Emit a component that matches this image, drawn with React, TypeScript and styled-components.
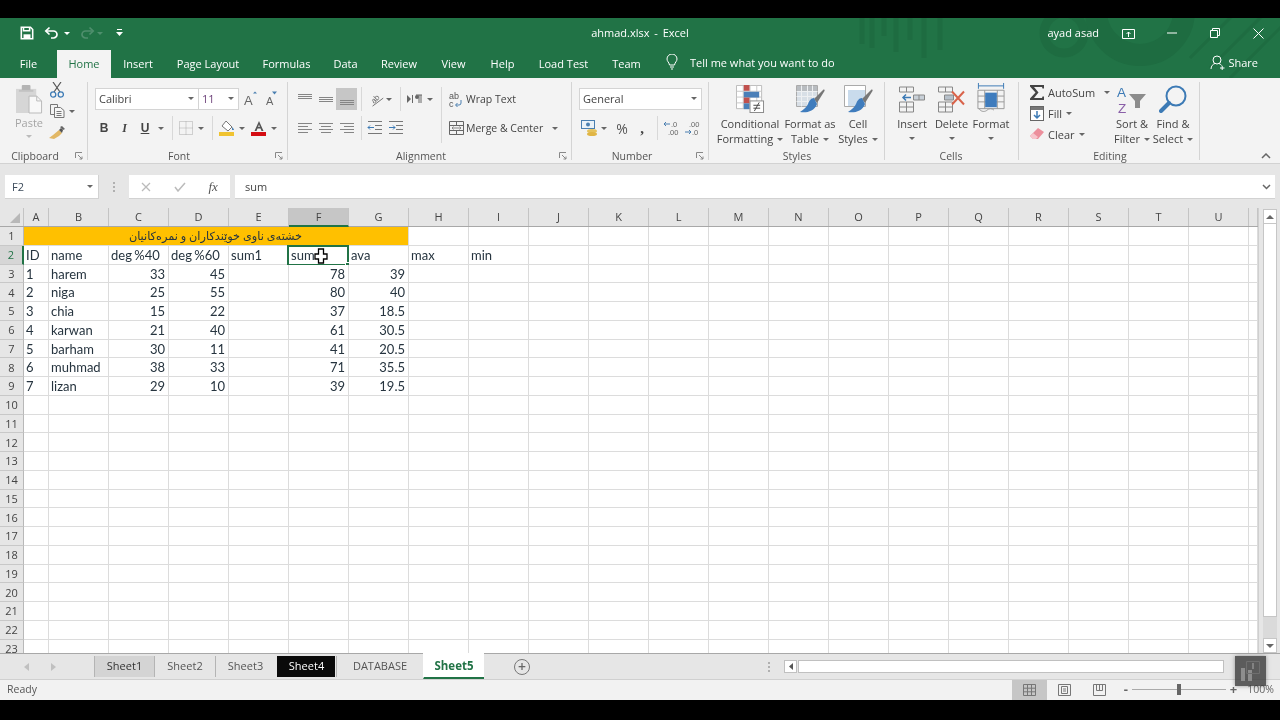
import * as React from 'react';
import styled, { createGlobalStyle } from 'styled-components';

const GlobalStyle = createGlobalStyle`
  html, body {
    margin: 0;
    background: #000;
  }
`;

const uiFont = `"Open Sans", "Noto Sans", "Liberation Sans", sans-serif`;
const cellFont = `Lato, "DejaVu Sans", "Liberation Sans", sans-serif`;

const Window = styled.div`
  width: 1280px;
  height: 720px;
  padding: 18px 0 20px;
  box-sizing: border-box;
  display: flex;
  flex-direction: column;
  background: #000;
  overflow: hidden;
  font-family: ${uiFont};
  font-size: 11px;
  color: #444;
  filter: blur(0.3px);
`;

/* green title + tabs */
const Head = styled.header`
  position: relative;
  height: 60px;
  flex: none;
  background: #217346;
  color: #fff;
  overflow: hidden;
`;

const Pattern = styled.svg`
  position: absolute;
  left: 840px;
  top: 0;
`;

const TitleBar = styled.div`
  position: relative;
  height: 30px;
  display: grid;
  grid-template-columns: 1fr auto 1fr;
  align-items: center;
`;

const Quick = styled.div`
  display: flex;
  align-items: center;
  padding-left: 20px;
`;

const TitleText = styled.div`
  font-size: 11px;
  word-spacing: 2px;
  padding-bottom: 2px;
`;

const WinControls = styled.div`
  display: flex;
  align-items: center;
  justify-content: flex-end;
`;

const UserName = styled.span`
  font-size: 11px;
  margin-right: 8px;
  padding-bottom: 2px;
`;

const WinBtn = styled.div<{ $w: number }>`
  width: ${(p) => p.$w}px;
  display: flex;
  justify-content: center;
  align-items: center;
`;

const TabBar = styled.nav`
  position: relative;
  height: 30px;
  display: flex;
`;

const Tab = styled.div<{ $w: number; $active?: boolean }>`
  width: ${(p) => p.$w}px;
  margin-top: 2px;
  padding-bottom: 2px;
  box-sizing: border-box;
  display: flex;
  align-items: center;
  justify-content: center;
  font-size: 11px;
  color: ${(p) => (p.$active ? '#217346' : '#fff')};
  background: ${(p) => (p.$active ? '#f3f3f3' : 'transparent')};
`;

const TellMe = styled.div`
  display: flex;
  align-items: center;
  gap: 12px;
  margin-left: 13px;
  padding-bottom: 2px;
  font-size: 11px;
`;

const Share = styled.div`
  margin-left: auto;
  margin-right: 22px;
  padding-bottom: 2px;
  display: flex;
  align-items: center;
  gap: 3px;
  font-size: 11px;
`;

/* ribbon */
const Ribbon = styled.section`
  position: relative;
  height: 86px;
  flex: none;
  display: flex;
  background: #f3f3f3;
  border-bottom: 1px solid #d2d2d2;
  box-sizing: border-box;
`;

const Group = styled.div<{ $w: number }>`
  position: relative;
  width: ${(p) => p.$w}px;
  height: 78px;
  margin-top: 4px;
  box-sizing: border-box;
  border-right: 1px solid #d4d4d4;
  flex: none;
`;

const GroupBody = styled.div<{ $pad?: number }>`
  height: 66px;
  display: flex;
  padding-left: ${(p) => p.$pad ?? 0}px;
`;

const GroupLabel = styled.div<{ $c: number }>`
  width: ${(p) => p.$c * 2}px;
  text-align: center;
  line-height: 16px;
  font-size: 10.5px;
  color: #555;
`;

const Launcher = styled.svg`
  position: absolute;
  right: 4px;
  bottom: 0;
`;

const Column = styled.div<{ $w?: number }>`
  display: flex;
  flex-direction: column;
  ${(p) => (p.$w ? `width: ${p.$w}px;` : '')}
`;

const ToolRow = styled.div<{ $pad?: number }>`
  display: flex;
  align-items: center;
  height: 22px;
  margin-top: 6px;
  padding-left: ${(p) => p.$pad ?? 0}px;
  & + & {
    margin-top: 7px;
  }
`;

const Slot = styled.div<{ $w: number; $on?: boolean }>`
  width: ${(p) => p.$w}px;
  height: 22px;
  flex: none;
  display: flex;
  align-items: center;
  justify-content: center;
  background: ${(p) => (p.$on ? '#c6c6c6' : 'transparent')};
`;

const Caret = styled.span<{ $inline?: boolean; $color?: string; $gap?: number; $top?: number }>`
  display: inline-block;
  width: 0;
  height: 0;
  border-left: 3px solid transparent;
  border-right: 3px solid transparent;
  border-top: 3px solid ${(p) => p.$color ?? '#666'};
  margin-left: ${(p) => p.$gap ?? (p.$inline ? 4 : 0)}px;
  margin-top: ${(p) => p.$top ?? 0}px;
  ${(p) => (p.$inline ? 'vertical-align: 2px;' : '')}
`;

const Divider = styled.div<{ $l: number; $r: number }>`
  width: 1px;
  height: 24px;
  flex: none;
  background: #d8d8d8;
  margin: 0 ${(p) => p.$r}px 0 ${(p) => p.$l}px;
`;

const TallDivider = styled.div`
  width: 1px;
  height: 56px;
  margin-top: 5px;
  background: #d8d8d8;
  flex: none;
`;

const SelectBox = styled.div<{ $w: number; $color?: string; $join?: boolean }>`
  width: ${(p) => p.$w}px;
  height: 22px;
  margin-left: ${(p) => (p.$join ? -1 : 0)}px;
  box-sizing: border-box;
  display: flex;
  align-items: center;
  justify-content: space-between;
  padding: 0 4px 1px 3px;
  background: #fff;
  border: 1px solid #d4d4d4;
  font-size: 11px;
  color: ${(p) => p.$color ?? '#444'};
`;

const StyleLetter = styled.span<{ $i?: boolean; $u?: boolean }>`
  font-family: ${(p) => (p.$i ? `"Liberation Serif", serif` : `"Liberation Sans", sans-serif`)};
  font-size: 12px;
  font-weight: bold;
  font-style: ${(p) => (p.$i ? 'italic' : 'normal')};
  text-decoration: ${(p) => (p.$u ? 'underline' : 'none')};
  color: #444;
`;

const Percent = styled.span`
  font-size: 14px;
  color: #555;
`;

const Comma = styled.span`
  font-family: "Liberation Serif", serif;
  font-size: 15px;
  font-weight: bold;
  color: #444;
  line-height: 12px;
`;

const RowText = styled.span`
  font-size: 10.5px;
  margin-left: 2px;
  padding-bottom: 1px;
  color: #444;
  white-space: nowrap;
`;

const PasteBtn = styled.div`
  width: 32px;
  margin-left: 13px;
  margin-top: 3px;
  display: flex;
  flex-direction: column;
  align-items: center;
  color: #a5a5a5;
  font-size: 11px;
  line-height: 15px;
`;

const PasteText = styled.span`
  margin-top: 1px;
`;

const MiniColumn = styled.div`
  margin-top: -3px;
  display: flex;
  flex-direction: column;
`;

const MiniRow = styled.div`
  height: 21.5px;
  display: flex;
  align-items: center;
  padding-left: 2px;
`;

const BigBtn = styled.div<{ $w: number }>`
  width: ${(p) => p.$w}px;
  flex: none;
  display: flex;
  flex-direction: column;
  align-items: center;
  text-align: center;
  font-size: 11px;
  line-height: 15px;
  color: #444;
  white-space: nowrap;
`;

const BigIcon = styled.div`
  height: 34px;
  padding-bottom: 3px;
  box-sizing: border-box;
  display: flex;
  align-items: flex-end;
  justify-content: center;
`;

const EditRow = styled.div`
  height: 21px;
  padding-bottom: 1px;
  box-sizing: border-box;
  display: flex;
  align-items: center;
  font-size: 11px;
  color: #444;
`;

const EditIcon = styled.div`
  width: 20px;
  display: flex;
  justify-content: center;
  margin-right: 1px;
`;

const Collapse = styled.svg`
  position: absolute;
  right: 9px;
  bottom: 4px;
`;

const SortSvg = styled.svg`
  margin-bottom: -2.5px;
`;

/* formula bar */
const FormulaArea = styled.div`
  flex: none;
  height: 44px;
  padding-top: 11px;
  box-sizing: border-box;
  background: #e6e6e6;
  display: flex;
  align-items: flex-start;
`;

const NameBox = styled.div`
  width: 94px;
  height: 24px;
  margin-left: 5px;
  box-sizing: border-box;
  background: #fff;
  border-right: 1px solid #d2d2d2;
  border-bottom: 1px solid #d2d2d2;
  display: flex;
  align-items: center;
  justify-content: space-between;
  padding: 0 5px 0 7px;
  font-size: 11px;
  color: #3b4a5a;
`;

const GripDots = styled.div`
  width: 30px;
  height: 24px;
  display: flex;
  align-items: center;
  justify-content: center;
  &::before {
    content: '';
    width: 2px;
    height: 10px;
    background: repeating-linear-gradient(#b0b0b0 0 2px, transparent 2px 4px);
  }
`;

const FuncBox = styled.div`
  width: 101px;
  height: 24px;
  box-sizing: border-box;
  background: #fff;
  border-bottom: 1px solid #d2d2d2;
  display: flex;
  align-items: center;
`;

const FuncSlot = styled.div`
  width: 34px;
  display: flex;
  justify-content: center;
  font-family: "Liberation Serif", serif;
  font-style: italic;
  font-size: 13px;
  color: #555;
`;

const FormulaInput = styled.div`
  width: 1040px;
  height: 24px;
  margin-left: 5px;
  box-sizing: border-box;
  padding: 0 4px 0 10px;
  background: #fff;
  border-bottom: 1px solid #d2d2d2;
  display: flex;
  align-items: center;
  justify-content: space-between;
  font-size: 11px;
  color: #444;
`;

/* sheet */
const SheetArea = styled.div`
  flex: none;
  height: 445px;
  display: flex;
  background: #e6e6e6;
  overflow: hidden;
`;

const Sheet = styled.div`
  width: 1258px;
  flex: none;
  overflow: hidden;
  border-right: 1px solid #cfcfcf;
`;

const ColHeads = styled.div`
  height: 19px;
  display: flex;
  background: #e6e6e6;
  border-bottom: 1px solid #a8a8a8;
  box-sizing: border-box;
`;

const Corner = styled.div`
  width: 24px;
  flex: none;
  position: relative;
  border-right: 1px solid #c4c4c4;
  box-sizing: border-box;
  &::after {
    content: '';
    position: absolute;
    right: 3px;
    bottom: 3px;
    border-left: 10px solid transparent;
    border-bottom: 10px solid #b8b8b8;
  }
`;

const ColHead = styled.div<{ $w: number; $on?: boolean }>`
  width: ${(p) => p.$w}px;
  height: ${(p) => (p.$on ? '19px' : 'auto')};
  padding-bottom: ${(p) => (p.$on ? 0 : 2)}px;
  flex: none;
  box-sizing: border-box;
  display: flex;
  align-items: center;
  justify-content: center;
  font-size: 11px;
  color: #444;
  background: ${(p) => (p.$on ? '#c6c6c6' : 'transparent')};
  border-right: 1px solid #c4c4c4;
  border-bottom: ${(p) => (p.$on ? '2px solid #217346' : 'none')};
`;

const Row = styled.div`
  height: 18.75px;
  display: flex;
`;

const RowHead = styled.div<{ $on?: boolean }>`
  width: 24px;
  flex: none;
  box-sizing: border-box;
  display: flex;
  align-items: center;
  justify-content: center;
  background: ${(p) => (p.$on ? '#d6d6d6' : '#e6e6e6')};
  color: ${(p) => (p.$on ? '#217346' : '#444')};
  border-right: ${(p) => (p.$on ? '2px solid #217346' : '1px solid #b8b8b8')};
  border-bottom: 1px solid #c8c8c8;
  font-size: 11px;
`;

const Cell = styled.div<{ $w: number; $num?: boolean; $merged?: boolean }>`
  position: relative;
  width: ${(p) => p.$w}px;
  flex: none;
  box-sizing: border-box;
  line-height: ${(p) => (p.$merged ? 18 : 19)}px;
  padding: 0 3px 0 2px;
  white-space: nowrap;
  font-family: ${cellFont};
  font-size: ${(p) => (p.$merged ? 11.3 : 13)}px;
  word-spacing: ${(p) => (p.$merged ? 0 : -1)}px;
  color: #26343f;
  text-align: ${(p) => (p.$num ? 'right' : p.$merged ? 'center' : 'left')};
  background: ${(p) => (p.$merged ? '#ffc000' : '#fff')};
  border-right: 1px solid #dcdcdc;
  border-bottom: 1px solid #dcdcdc;
`;

const Selection = styled.div`
  position: absolute;
  left: -2px;
  top: -1px;
  right: -1px;
  bottom: -2px;
  border: 2px solid #217346;
  pointer-events: none;
  &::after {
    content: '';
    position: absolute;
    right: -3px;
    bottom: -3px;
    width: 5px;
    height: 5px;
    background: #217346;
    border: 1px solid #fff;
    box-sizing: border-box;
  }
`;

const CursorMark = styled.svg`
  position: absolute;
  left: 25px;
  top: 2px;
  z-index: 2;
`;

const VScroll = styled.div`
  width: 14px;
  margin-left: 4px;
  padding-top: 1px;
  flex: none;
  display: flex;
  flex-direction: column;
`;

const ScrollBtn = styled.div`
  height: 15px;
  box-sizing: border-box;
  flex: none;
  background: #fff;
  border: 1px solid #c6c6c6;
  display: flex;
  align-items: center;
  justify-content: center;
`;

const ScrollThumb = styled.div`
  flex: 1;
  background: #fff;
  border: 1px solid #c6c6c6;
  border-top: none;
`;

const ScrollTrack = styled.div`
  height: 21px;
  flex: none;
  background: #dadada;
`;

/* tabs at the bottom */
const SheetBar = styled.div`
  position: relative;
  flex: none;
  height: 27px;
  display: flex;
  align-items: flex-start;
  background: #e6e6e6;
  border-top: 1px solid #a8a8a8;
  border-bottom: 1px solid #d0d0d0;
  box-sizing: border-box;
`;

const NavArrows = styled.div`
  width: 94px;
  height: 25px;
  flex: none;
  display: flex;
  align-items: center;
  padding-left: 24px;
  gap: 22px;
  box-sizing: border-box;
`;

type TabKind = 'plain' | 'hover' | 'dark' | 'active';

const SheetTab = styled.div<{ $w: number; $kind?: TabKind }>`
  width: ${(p) => p.$w}px;
  height: ${(p) => (p.$kind === 'active' ? '26px' : '21px')};
  margin-top: ${(p) => (p.$kind === 'active' ? '-1px' : '2px')};
  margin-left: ${(p) => (p.$kind === 'dark' ? 2 : 0)}px;
  margin-right: ${(p) => (p.$kind === 'dark' ? 1 : 0)}px;
  padding-top: ${(p) => (p.$kind === 'active' ? 1 : 0)}px;
  padding-bottom: ${(p) => (p.$kind === 'active' ? 0 : 2)}px;
  box-sizing: border-box;
  flex: none;
  display: flex;
  align-items: center;
  justify-content: center;
  font-size: ${(p) => (p.$kind === 'active' ? 11.5 : 11)}px;
  font-weight: ${(p) => (p.$kind === 'active' ? 700 : 400)};
  color: ${(p) =>
    p.$kind === 'dark' ? '#fff' : p.$kind === 'active' ? '#217346' : p.$kind === 'hover' ? '#333' : '#555'};
  background: ${(p) =>
    p.$kind === 'dark' ? '#0a0a0a' : p.$kind === 'active' ? '#fff' : p.$kind === 'hover' ? '#d4d4d4' : 'transparent'};
  border-left: 1px solid ${(p) => (p.$kind === 'active' || p.$kind === 'dark' ? 'transparent' : '#b4b4b4')};
  border-bottom: ${(p) => (p.$kind === 'active' ? '2px solid #217346' : 'none')};
`;

const AddSheet = styled.div`
  width: 14px;
  height: 14px;
  margin: 5px 0 0 30px;
  border: 1px solid #777;
  border-radius: 50%;
  color: #666;
  display: flex;
  align-items: center;
  justify-content: center;
  font-size: 14px;
  line-height: 14px;
  font-weight: 600;
`;

const HScroll = styled.div`
  position: absolute;
  left: 768px;
  top: 6px;
  display: flex;
  align-items: center;
`;

const HGrip = styled.div`
  width: 2px;
  height: 10px;
  margin-right: 14px;
  background: repeating-linear-gradient(#b0b0b0 0 2px, transparent 2px 4px);
`;

const HLeft = styled.div`
  width: 13px;
  height: 13px;
  box-sizing: border-box;
  background: #fff;
  border: 1px solid #c0c0c0;
  display: flex;
  align-items: center;
  justify-content: center;
`;

const HThumb = styled.div`
  width: 426px;
  height: 13px;
  margin-left: 1px;
  box-sizing: border-box;
  background: #fff;
  border: 1px solid #c0c0c0;
`;

const Overlay = styled.div`
  position: absolute;
  left: 1235px;
  top: 2px;
  width: 31px;
  height: 30px;
  background: rgba(60, 60, 60, 0.82);
  box-shadow: 0 0 4px rgba(60, 60, 60, 0.5);
  display: flex;
  align-items: center;
  justify-content: center;
  z-index: 3;
`;

/* status */
const StatusBar = styled.footer`
  flex: none;
  height: 20px;
  background: #f2f2f2;
  display: flex;
  align-items: center;
  padding-left: 7px;
  font-size: 10.5px;
  color: #555;
`;

const ReadyText = styled.span`
  padding-bottom: 2px;
`;

const ViewBtns = styled.div`
  margin-left: auto;
  display: flex;
  align-items: center;
  height: 20px;
`;

const ViewBtn = styled.div<{ $on?: boolean }>`
  width: 35px;
  height: 20px;
  padding-bottom: 1px;
  box-sizing: border-box;
  display: flex;
  align-items: center;
  justify-content: center;
  background: ${(p) => (p.$on ? '#c6c6c6' : 'transparent')};
`;

const Zoomer = styled.div`
  display: flex;
  align-items: center;
  margin-left: 7px;
  margin-right: 6px;
  padding-bottom: 2px;
  gap: 4px;
  color: #666;
`;

const ZoomTrack = styled.div`
  position: relative;
  width: 94px;
  height: 1px;
  background: #aaa;
  &::after {
    content: '';
    position: absolute;
    left: 45px;
    top: -5px;
    width: 4px;
    height: 11px;
    background: #666;
  }
`;

const ZoomSign = styled.span`
  font-size: 13px;
  font-weight: 700;
  line-height: 14px;
`;

const ZoomValue = styled.span`
  margin-left: 6px;
  font-size: 10.5px;
`;

/* ---- drawings ---- */
const lineGray = '#858585';

const Lines = ({ rows }: { rows: [number, number, number][] }) => (
  <svg width="16" height="14">
    {rows.map(([a, b, y]) => (
      <line key={y} x1={a} x2={b} y1={y + 0.5} y2={y + 0.5} stroke={lineGray} />
    ))}
  </svg>
);

const Launch = () => (
  <Launcher width="8" height="8" viewBox="0 0 8 8" fill="none" stroke="#888">
    <path d="M.5 6V.5H7M3 3l4 4M7 4.5V7H4.5" />
  </Launcher>
);

const SaveIcon = () => (
  <svg width="14" height="14" viewBox="0 0 16 16" fill="none" stroke="#fff" strokeWidth="1.8">
    <path d="M1.5 1.5h10.5l2.500 2.500v10.500h-13z" />
    <path d="M4 1.500v4h7v-4" />
    <path d="M4 14.500v-5h8v5" fill="#fff" stroke="none" />
  </svg>
);

const UndoIcon = ({ dim }: { dim?: boolean }) => (
  <svg width="16" height="14" viewBox="0 0 16 14" fill="none" stroke={dim ? '#4f8f6d' : '#fff'} strokeWidth="1.700">
    <g transform={dim ? 'matrix(-1 0 0 1 16 0)' : undefined}>
      <path d="M5.500 1.500L1.800 5l3.700 3.500" />
      <path d="M2 5h7.500a3.500 3.500 0 0 1 0 7H7" />
    </g>
  </svg>
);

const PasteIcon = () => (
  <svg width="27" height="29" viewBox="0 0 28 30">
    <rect x="0" y="4" width="21" height="25" fill="#d6d6d6" />
    <rect x="6" y="0" width="9" height="6" rx="1" fill="#b4b4b4" />
    <rect x="3" y="5" width="15" height="2" fill="#c2c2c2" />
    <path d="M13.500 11.500h8l5 5v12.500h-13z" fill="#f8f8f8" stroke="#b8b8b8" />
    <path d="M21.500 11.500v5h5" fill="none" stroke="#b8b8b8" />
  </svg>
);

const ScissorsIcon = () => (
  <svg width="14" height="16" viewBox="0 0 14 16" fill="none">
    <path d="M3 0l7 10M11 0L4 10" stroke="#555" strokeWidth="1.200" />
    <circle cx="3.200" cy="12.500" r="2.600" stroke="#3c7ab5" strokeWidth="1.300" />
    <circle cx="10.800" cy="12.500" r="2.600" stroke="#3c7ab5" strokeWidth="1.300" />
  </svg>
);

const CopyIcon = () => (
  <svg width="15" height="14" viewBox="0 0 15 14" fill="none" stroke="#777">
    <path d="M.5.5h7v10h-7z" fill="#f3f3f3" />
    <path d="M4.500 3.500h6l3.500 3v7H4.500z" fill="#f6f6f6" />
    <path d="M6.500 7.500h5M6.500 9.500h5M6.500 11.500h5" />
  </svg>
);

const BrushIcon = () => (
  <svg width="16" height="14" viewBox="0 0 16 14">
    <path d="M10 4l3 3-3 3-5 3-5-1 4-3z" fill="#e2b866" />
    <path d="M10 4l2-2 2 2-1 3z" fill="#555" />
    <path d="M11 1l2-1 3 3-2 1z" fill="#666" />
  </svg>
);

const FontSizeIcon = ({ up }: { up?: boolean }) => (
  <svg width="16" height="18" viewBox="0 0 16 18">
    <text x={up ? 3 : 5} y="15" fontFamily='"Liberation Sans", sans-serif' fontSize={up ? 13 : 11} fill="#666">
      A
    </text>
    <path d={up ? 'M12 3.500l2-2 2 2z' : 'M11 1.500h5l-2.500 3z'} fill="#4a7fb0" />
  </svg>
);

const BordersIcon = () => (
  <svg width="14" height="14" viewBox="0 0 14 14" fill="none" stroke="#aaa" strokeDasharray="1 1">
    <path d="M.5.5h13v13h-13zM7 .5v13M.5 7h13" />
  </svg>
);

const FillIcon = () => (
  <svg width="16" height="15" viewBox="0 0 16 15">
    <path d="M7 0l6 6-4 4-6-5z" fill="#fff" stroke="#777" />
    <path d="M13 6c1 1 2 2 2 3l-2 0z" fill="#4a7fb0" />
    <rect x="0" y="11" width="15" height="4" fill="#f0c330" />
  </svg>
);

const FontColorIcon = () => (
  <svg width="16" height="15" viewBox="0 0 16 15">
    <path d="M8 0L3.500 10h2l1-2.500h3l1 2.500h2zM7.200 6L8 3.500 8.800 6z" fill="#555" />
    <rect x="0" y="11" width="15" height="4" fill="#d40d12" />
  </svg>
);

const OrientIcon = () => (
  <svg width="18" height="18" viewBox="0 0 18 18">
    <text x="2" y="12" transform="rotate(-45 7 9)" fontFamily='"Liberation Sans", sans-serif' fontSize="9" fill="#666">
      ab
    </text>
    <path d="M4 17L16 8" stroke="#666" />
  </svg>
);

const RtlIcon = () => (
  <svg width="16" height="10" viewBox="0 0 16 10">
    <path d="M0 1l4 4-4 4zM5 1h1v8H5z" fill="#666" />
    <path d="M9 1h6M12 1v8M14 1v8" stroke="#666" />
    <circle cx="10" cy="3" r="2" fill="#666" />
  </svg>
);

const WrapIcon = () => (
  <svg width="14" height="17" viewBox="0 0 14 17">
    <text x="0" y="8" fontFamily='"Liberation Sans", sans-serif' fontSize="9" fill="#555">
      ab
    </text>
    <text x="0" y="16" fontFamily='"Liberation Sans", sans-serif' fontSize="9" fill="#555">
      c
    </text>
    <path d="M12 9v3a2 2 0 0 1-2 2H7" fill="none" stroke="#4a7fb0" />
    <path d="M8.500 12l-2 2 2 2" fill="none" stroke="#4a7fb0" />
  </svg>
);

const MergeIcon = () => (
  <svg width="15" height="14" viewBox="0 0 15 14" fill="none" stroke="#666">
    <path d="M.5.5h14v13H.5zM.5 4.500h14M.5 9.500h14M7.500.5v4M7.500 9.500v4" />
    <path d="M3 7h9M4.500 5.500L3 7l1.500 1.500M10.500 5.500L12 7l-1.500 1.500" stroke="#888" />
  </svg>
);

const CurrencyIcon = () => (
  <svg width="17" height="16" viewBox="0 0 17 16">
    <rect x=".5" y=".5" width="13" height="8" fill="#eaf2f8" stroke="#4a7fb0" />
    <circle cx="7" cy="4.500" r="2" fill="#4a7fb0" />
    <ellipse cx="11" cy="11" rx="5" ry="2" fill="#e6c25a" />
    <ellipse cx="11" cy="14" rx="5" ry="2" fill="#e0b545" />
  </svg>
);

const DecimalIcon = ({ more }: { more?: boolean }) => (
  <svg
    width="18"
    height="16"
    viewBox="0 0 18 16"
    fontFamily='"Liberation Sans", sans-serif'
    fontSize="7.500"
    fill="#666"
  >
    <text x={more ? 8 : 5} y="7">
      {more ? '.0' : '.00'}
    </text>
    <text x={more ? 5 : 8} y="15">
      {more ? '.00' : '.0'}
    </text>
    {more ? (
      <path d="M7 4H1M3 2L1 4l2 2" fill="none" stroke="#4a7fb0" />
    ) : (
      <path d="M1 12h6M5 10l2 2-2 2" fill="none" stroke="#4a7fb0" />
    )}
  </svg>
);

const CondFormatIcon = () => (
  <svg width="29" height="28" viewBox="0 0 30 29">
    <path d="M.5.5h26v24H.5z" fill="#fff" stroke="#bcbcbc" />
    <path d="M.5 6.500h26M.5 12.500h26M.5 18.500h26M7.500.5v24M14.500.5v24M21.500.5v24" stroke="#c8c8c8" />
    <rect x="8" y="0" width="6" height="6" fill="#c0504d" />
    <rect x="8" y="7" width="16" height="6" fill="#4a7fb8" />
    <rect x="8" y="13" width="6" height="6" fill="#c0504d" />
    <rect x="8" y="19" width="6" height="6" fill="#4a7fb8" />
    <rect x="14.500" y="16.500" width="14" height="12" fill="#fff" stroke="#8a8a8a" />
    <path d="M18 21h7M18 24h7M24 18l-5 9" stroke="#444" />
  </svg>
);

const BrushOverlay = () => (
  <>
    <path d="M18 14L27 5c1-1 2 0 1.500 1L21 18z" fill="#777" />
    <path d="M18 13c-3 0-5 3-6 6-1 3-4 5-8 8 6 1 14 0 17-8z" fill="#3f7cbd" />
  </>
);

const TableIcon = () => (
  <svg width="29" height="28" viewBox="0 0 29 28">
    <path d="M.5.5h21v21H.5z" fill="#d8dfe6" stroke="#aaa" />
    <rect x="1" y="1" width="20" height="5" fill="#b8bcc0" />
    <path d="M.5 6.500h21M.5 11.500h21M.5 16.500h21M5.500.5v21M11.500.5v21M16.500.5v21" stroke="#eef0f2" />
    <BrushOverlay />
  </svg>
);

const CellStyleIcon = () => (
  <svg width="29" height="28" viewBox="0 0 29 28">
    <path d="M.5.5h21v21H.5z" fill="#fff" stroke="#aaa" />
    <rect x="4" y="5" width="17" height="16" fill="#c9dbec" />
    <BrushOverlay />
  </svg>
);

const InsertIcon = () => (
  <svg width="26" height="27" viewBox="0 0 26 26" fill="none" stroke="#888">
    <path d="M.5.5h14v5H.5zM7.500.5v5" />
    <path d="M.5 15.500h14v10H.5zM7.500 15.500v10M.5 20.500h14" />
    <path d="M14.500 8.500h11v5h-11zM20 8.500v5" fill="#c8d0d8" />
    <path d="M12 11H4M7 8l-3 3 3 3" stroke="#3c7ab5" strokeWidth="1.500" />
  </svg>
);

const DeleteIcon = () => (
  <svg width="28" height="27" viewBox="0 0 28 26" fill="none" stroke="#888">
    <path d="M.5.5h14v5H.5zM7.500.5v5" />
    <path d="M.5 15.500h14v10H.5zM7.500 15.500v10M.5 20.500h14" />
    <path d="M6.500 8.500h9v5h-9z" fill="#b6c0ca" />
    <path d="M14 5l12 13M26 5L14 18" stroke="#d9634a" strokeWidth="2" />
  </svg>
);

const FormatIcon = () => (
  <svg width="28" height="31" viewBox="0 0 28 32" fill="none" stroke="#999">
    <path d="M1 4h26" stroke="#3c7ab5" />
    <path d="M1 1v6M27 1v6" stroke="#3c7ab5" />
    <path d="M.5 8.500h27v19h-27zM.5 14.500h27M.5 20.500h27M7.500 8.500v19M20.500 8.500v19" />
    <rect x="8" y="11" width="12" height="15" fill="#3f7cbd" stroke="none" />
    <path d="M2 28c2 3 6 3 8 1s5-2 7 0" />
  </svg>
);

const SigmaIcon = () => (
  <svg width="15" height="15" viewBox="0 0 15 15">
    <path d="M0 0h14v3.500h-1.500L12 2H4l4.500 5.500L4 13h8l.5-1.500H14V15H0v-1.500L5.500 7.500 0 1.500z" fill="#444" />
  </svg>
);

const FillDownIcon = () => (
  <svg width="14" height="15" viewBox="0 0 14 15">
    <rect x=".5" y=".5" width="13" height="14" fill="#fff" stroke="#666" />
    <rect x="1" y="1" width="12" height="3" fill="#777" />
    <path d="M7 5v7M4 9l3 3 3-3" fill="none" stroke="#3c7ab5" strokeWidth="1.500" />
  </svg>
);

const EraserIcon = () => (
  <svg width="14" height="12" viewBox="0 0 14 12">
    <path d="M8 0l6 4-6 7H3L0 8z" fill="#ec8f9c" />
    <path d="M0 8l3-3 5 4-2 2H3z" fill="#f7c5cc" />
  </svg>
);

const SortIcon = () => (
  <SortSvg width="30" height="31" viewBox="0 0 30 31">
    <text x="0" y="12.300" fontFamily='"Liberation Sans", sans-serif' fontSize="13.500" fill="#3c7ab5">
      A
    </text>
    <text x="1" y="27.500" fontFamily='"Liberation Sans", sans-serif' fontSize="13.500" fill="#8a5fa8">
      Z
    </text>
    <path d="M12 9h17l-6 7v7h-5v-7z" fill="#8c8c8c" />
  </SortSvg>
);

const FindIcon = () => (
  <svg width="28" height="28" viewBox="0 0 28 28" fill="none">
    <circle cx="17" cy="11" r="9.500" stroke="#3c7ab5" strokeWidth="2" />
    <path d="M10 18L2 26" stroke="#3c7ab5" strokeWidth="4" strokeLinecap="round" />
  </svg>
);

const HeadPattern = () => (
  <Pattern width="440" height="60" viewBox="0 0 440 60" fill="none" stroke="#1e6c41">
    <path d="M22 0v26M32 0v30M44 0v18M56 0v34M70 0v22M84 0v40M100 0v32" strokeWidth="5" />
    <circle cx="224" cy="15" r="20" strokeWidth="9" />
    <circle cx="300" cy="-7" r="44" strokeWidth="22" />
    <path d="M350 40l60-60M370 50l60-60M390 60l60-60" strokeWidth="3" />
  </Pattern>
);

const columns: [string, number][] = [
  ['A', 25], ['B', 60], ['C', 60], ['D', 60], ['E', 60], ['F', 60], ['G', 60], ['H', 60],
  ['I', 60], ['J', 60], ['K', 60], ['L', 60], ['M', 60], ['N', 60], ['O', 60], ['P', 60],
  ['Q', 60], ['R', 60], ['S', 60], ['T', 60], ['U', 60], ['', 9],
];

const tabs: [string, number][] = [
  ['File', 57], ['Home', 54], ['Insert', 54], ['Page Layout', 86], ['Formulas', 71], ['Data', 47],
  ['Review', 60], ['View', 49], ['Help', 49], ['Load Test', 73], ['Team', 53],
];

const sheets: [string, number, TabKind][] = [
  ['Sheet1', 60, 'hover'],
  ['Sheet2', 61, 'plain'],
  ['Sheet3', 60, 'plain'],
  ['Sheet4', 58, 'dark'],
  ['DATABASE', 87, 'plain'],
  ['Sheet5', 61, 'active'],
];

const heading = ['ID', 'name', 'deg %40', 'deg %60', 'sum1', 'sum', 'ava', 'max', 'min'];

const people: [number, string, number, number, number, number][] = [
  [1, 'harem', 33, 45, 78, 39],
  [2, 'niga', 25, 55, 80, 40],
  [3, 'chia', 15, 22, 37, 18.5],
  [4, 'karwan', 21, 40, 61, 30.5],
  [5, 'barham', 30, 11, 41, 20.5],
  [6, 'muhmad', 38, 33, 71, 35.5],
  [7, 'lizan', 29, 10, 39, 19.5],
];

const rest = columns.slice(7);

function renderRow(n: number) {
  if (n === 1) {
    const merged = columns.slice(0, 7).reduce((s, c) => s + c[1], 0);
    return (
      <>
        <Cell $w={merged} $merged>
          خشتەی ناوی خوێندکاران و نمرەکانیان
        </Cell>
        {rest.map(([c, w]) => (
          <Cell key={c} $w={w} />
        ))}
      </>
    );
  }
  if (n === 2) {
    return columns.map(([c, w], i) => (
      <Cell key={c} $w={w}>
        {heading[i]}
        {c === 'F' && (
          <>
            <Selection />
            <CursorMark width="14" height="16" viewBox="0 0 14 16">
              <path d="M4.500 1h5v5h3.500v5H9.500v4h-5v-4H1V6h3.500z" fill="#fff" stroke="#000" strokeWidth="1.300" />
            </CursorMark>
          </>
        )}
      </Cell>
    ));
  }
  const person = people[n - 3];
  if (person) {
    const [id, name, c, d, f, g] = person;
    const values = ['' + id, name, '' + c, '' + d, '', '' + f, '' + g];
    return columns.map(([col, w], i) => (
      <Cell key={col} $w={w} $num={i >= 2 && i <= 6}>
        {values[i]}
      </Cell>
    ));
  }
  return columns.map(([col, w]) => <Cell key={col} $w={w} />);
}

const rowNumbers = Array.from({ length: 23 }, (_, i) => i + 1);

function App() {
  return (
    <Window>
      <GlobalStyle />
      <Head>
        <HeadPattern />
        <TitleBar>
          <Quick>
            <SaveIcon />
            <Slot $w={10} />
            <UndoIcon />
            <Slot $w={14}>
              <Caret $color="#fff" />
            </Slot>
            <Slot $w={5} />
            <UndoIcon dim />
            <Slot $w={10}>
              <Caret $color="#4f8f6d" />
            </Slot>
            <Slot $w={28}>
              <svg width="7" height="8" viewBox="0 0 7 8" fill="#fff">
                <path d="M1 0h5v1H1zM0 3h7L3.500 7z" />
              </svg>
            </Slot>
          </Quick>
          <TitleText>ahmad.xlsx - Excel</TitleText>
          <WinControls>
            <UserName>ayad asad</UserName>
            <WinBtn $w={43}>
              <svg width="13" height="11" viewBox="0 0 13 11" fill="none" stroke="#fff">
                <path d="M.5 1.500h12v9H.5zM6.500 9V4M4.500 6l2-2 2 2" />
              </svg>
            </WinBtn>
            <WinBtn $w={43}>
              <svg width="10" height="2" viewBox="0 0 10 2" stroke="#fff">
                <path d="M0 1h10" />
              </svg>
            </WinBtn>
            <WinBtn $w={43}>
              <svg width="10" height="10" viewBox="0 0 10 10" fill="none" stroke="#fff">
                <path d="M.5 2.500h7v7h-7zM2.500 2.500v-2h7v7h-2" />
              </svg>
            </WinBtn>
            <WinBtn $w={44}>
              <svg width="11" height="11" viewBox="0 0 11 11" stroke="#fff">
                <path d="M.5.5l10 10M10.500.5l-10 10" />
              </svg>
            </WinBtn>
          </WinControls>
        </TitleBar>
        <TabBar>
          {tabs.map(([t, w]) => (
            <Tab key={t} $w={w} $active={t === 'Home'}>
              {t}
            </Tab>
          ))}
          <TellMe>
            <svg width="12" height="16" viewBox="0 0 12 16" fill="none" stroke="#fff">
              <path d="M3.500 11C3 8 1 7.500 1 5a5 5 0 0 1 10 0c0 2.500-2 3-2.500 6zM4 13h4M5 15h2" />
            </svg>
            Tell me what you want to do
          </TellMe>
          <Share>
            <svg width="15" height="15" viewBox="0 0 15 15" fill="none" stroke="#fff">
              <circle cx="7" cy="5" r="4" />
              <path d="M1 14c0-3 2-5 4-5.500M9 8.500c1 .3 2 1 2.500 2M10 13h4.500M12.200 10.800v4.200" />
            </svg>
            Share
          </Share>
        </TabBar>
      </Head>

      <Ribbon>
        <Group $w={88}>
          <GroupBody>
            <PasteBtn>
              <PasteIcon />
              <PasteText>Paste</PasteText>
              <Caret $color="#bbb" $top={5} />
            </PasteBtn>
            <MiniColumn>
              <MiniRow>
                <Slot $w={20}>
                  <ScissorsIcon />
                </Slot>
              </MiniRow>
              <MiniRow>
                <Slot $w={20}>
                  <CopyIcon />
                </Slot>
                <Caret $gap={2} />
              </MiniRow>
              <MiniRow>
                <Slot $w={20}>
                  <BrushIcon />
                </Slot>
              </MiniRow>
            </MiniColumn>
          </GroupBody>
          <GroupLabel $c={35}>Clipboard</GroupLabel>
          <Launch />
        </Group>

        <Group $w={200}>
          <GroupBody>
            <Column>
              <ToolRow $pad={7}>
                <SelectBox $w={104}>
                  Calibri
                  <Caret />
                </SelectBox>
                <SelectBox $w={41} $color="#6b3f78" $join>
                  11
                  <Caret />
                </SelectBox>
                <Slot $w={20}>
                  <FontSizeIcon up />
                </Slot>
                <Slot $w={20}>
                  <FontSizeIcon />
                </Slot>
              </ToolRow>
              <ToolRow $pad={6}>
                <Slot $w={20}>
                  <StyleLetter>B</StyleLetter>
                </Slot>
                <Slot $w={21}>
                  <StyleLetter $i>I</StyleLetter>
                </Slot>
                <Slot $w={20}>
                  <StyleLetter $u>U</StyleLetter>
                </Slot>
                <Slot $w={12}>
                  <Caret />
                </Slot>
                <Divider $l={5} $r={5} />
                <Slot $w={16}>
                  <BordersIcon />
                </Slot>
                <Slot $w={14}>
                  <Caret />
                </Slot>
                <Divider $l={4} $r={5} />
                <Slot $w={18}>
                  <FillIcon />
                </Slot>
                <Slot $w={12}>
                  <Caret />
                </Slot>
                <Slot $w={2} />
                <Slot $w={18}>
                  <FontColorIcon />
                </Slot>
                <Slot $w={12}>
                  <Caret />
                </Slot>
              </ToolRow>
            </Column>
          </GroupBody>
          <GroupLabel $c={91}>Font</GroupLabel>
          <Launch />
        </Group>

        <Group $w={284}>
          <GroupBody>
            <Column $w={153}>
              <ToolRow $pad={6}>
                <Slot $w={21}>
                  <Lines rows={[[1, 15, 2], [1, 15, 4], [1, 15, 6]]} />
                </Slot>
                <Slot $w={21}>
                  <Lines rows={[[1, 15, 5], [1, 15, 7], [1, 15, 9]]} />
                </Slot>
                <Slot $w={21} $on>
                  <Lines rows={[[1, 15, 8], [1, 15, 10], [1, 15, 12]]} />
                </Slot>
                <Divider $l={4} $r={7} />
                <Slot $w={16}>
                  <OrientIcon />
                </Slot>
                <Slot $w={8}>
                  <Caret />
                </Slot>
                <Divider $l={7} $r={5} />
                <Slot $w={18}>
                  <RtlIcon />
                </Slot>
                <Slot $w={12}>
                  <Caret />
                </Slot>
              </ToolRow>
              <ToolRow $pad={6}>
                <Slot $w={21}>
                  <Lines rows={[[1, 15, 2], [1, 11, 5], [1, 15, 8], [1, 11, 11]]} />
                </Slot>
                <Slot $w={21}>
                  <Lines rows={[[1, 15, 2], [3, 13, 5], [1, 15, 8], [3, 13, 11]]} />
                </Slot>
                <Slot $w={21}>
                  <Lines rows={[[1, 15, 2], [5, 15, 5], [1, 15, 8], [5, 15, 11]]} />
                </Slot>
                <Divider $l={4} $r={3} />
                <Slot $w={20}>
                  <svg width="16" height="14" viewBox="0 0 16 14" fill="none" stroke="#777">
                    <path d="M1 .5h14M8 4.500h7M8 8.500h7M1 12.500h14" />
                    <path d="M7 6.500H1M3 4.500l-2 2 2 2" stroke="#3c7ab5" />
                  </svg>
                </Slot>
                <Slot $w={21}>
                  <svg width="16" height="14" viewBox="0 0 16 14" fill="none" stroke="#777">
                    <path d="M1 .5h14M8 4.500h7M8 8.500h7M1 12.500h14" />
                    <path d="M1 6.500h6M5 4.500l2 2-2 2" stroke="#3c7ab5" />
                  </svg>
                </Slot>
              </ToolRow>
            </Column>
            <TallDivider />
            <Column>
              <ToolRow $pad={6}>
                <Slot $w={16}>
                  <WrapIcon />
                </Slot>
                <RowText>Wrap Text</RowText>
              </ToolRow>
              <ToolRow $pad={6}>
                <Slot $w={16}>
                  <MergeIcon />
                </Slot>
                <RowText>Merge &amp; Center</RowText>
                <Caret $gap={9} />
              </ToolRow>
            </Column>
          </GroupBody>
          <GroupLabel $c={133}>Alignment</GroupLabel>
          <Launch />
        </Group>

        <Group $w={137}>
          <GroupBody>
            <Column>
              <ToolRow $pad={7}>
                <SelectBox $w={123}>
                  General
                  <Caret />
                </SelectBox>
              </ToolRow>
              <ToolRow $pad={8}>
                <Slot $w={18}>
                  <CurrencyIcon />
                </Slot>
                <Slot $w={12}>
                  <Caret />
                </Slot>
                <Slot $w={2} />
                <Slot $w={20}>
                  <Percent>%</Percent>
                </Slot>
                <Slot $w={20}>
                  <Comma>,</Comma>
                </Slot>
                <Divider $l={5} $r={4} />
                <Slot $w={20}>
                  <DecimalIcon more />
                </Slot>
                <Slot $w={21}>
                  <DecimalIcon />
                </Slot>
              </ToolRow>
            </Column>
          </GroupBody>
          <GroupLabel $c={60}>Number</GroupLabel>
          <Launch />
        </Group>

        <Group $w={176}>
          <GroupBody $pad={4}>
            <BigBtn $w={74}>
              <BigIcon>
                <CondFormatIcon />
              </BigIcon>
              Conditional
              <span>
                Formatting
                <Caret $inline />
              </span>
            </BigBtn>
            <BigBtn $w={46}>
              <BigIcon>
                <TableIcon />
              </BigIcon>
              Format as
              <span>
                Table
                <Caret $inline />
              </span>
            </BigBtn>
            <BigBtn $w={50}>
              <BigIcon>
                <CellStyleIcon />
              </BigIcon>
              Cell
              <span>
                Styles
                <Caret $inline />
              </span>
            </BigBtn>
          </GroupBody>
          <GroupLabel $c={88}>Styles</GroupLabel>
        </Group>

        <Group $w={134}>
          <GroupBody $pad={7}>
            <BigBtn $w={40}>
              <BigIcon>
                <InsertIcon />
              </BigIcon>
              Insert
              <Caret $top={6} />
            </BigBtn>
            <BigBtn $w={39}>
              <BigIcon>
                <DeleteIcon />
              </BigIcon>
              Delete
              <Caret $top={6} />
            </BigBtn>
            <BigBtn $w={40}>
              <BigIcon>
                <FormatIcon />
              </BigIcon>
              Format
              <Caret $top={6} />
            </BigBtn>
          </GroupBody>
          <GroupLabel $c={66}>Cells</GroupLabel>
        </Group>

        <Group $w={181}>
          <GroupBody $pad={8}>
            <Column $w={85}>
              <EditRow>
                <EditIcon>
                  <SigmaIcon />
                </EditIcon>
                AutoSum
                <Caret $gap={9} />
              </EditRow>
              <EditRow>
                <EditIcon>
                  <FillDownIcon />
                </EditIcon>
                Fill
                <Caret $gap={4} />
              </EditRow>
              <EditRow>
                <EditIcon>
                  <EraserIcon />
                </EditIcon>
                Clear
                <Caret $gap={4} />
              </EditRow>
            </Column>
            <BigBtn $w={40}>
              <BigIcon>
                <SortIcon />
              </BigIcon>
              Sort &amp;
              <span>
                Filter
                <Caret $inline />
              </span>
            </BigBtn>
            <BigBtn $w={42}>
              <BigIcon>
                <FindIcon />
              </BigIcon>
              Find &amp;
              <span>
                Select
                <Caret $inline />
              </span>
            </BigBtn>
          </GroupBody>
          <GroupLabel $c={91}>Editing</GroupLabel>
        </Group>
        <Collapse width="10" height="6" viewBox="0 0 10 6" fill="none" stroke="#666" strokeWidth="1.500">
          <path d="M1 5l4-4 4 4" />
        </Collapse>
      </Ribbon>

      <FormulaArea>
        <NameBox>
          F2
          <Caret />
        </NameBox>
        <GripDots />
        <FuncBox>
          <FuncSlot>
            <svg width="10" height="10" viewBox="0 0 10 10" stroke="#bbb" strokeWidth="1.300">
              <path d="M1 1l8 8M9 1L1 9" />
            </svg>
          </FuncSlot>
          <FuncSlot>
            <svg width="12" height="10" viewBox="0 0 12 10" stroke="#bbb" strokeWidth="1.500" fill="none">
              <path d="M1 5l3 4 7-8" />
            </svg>
          </FuncSlot>
          <FuncSlot>fx</FuncSlot>
        </FuncBox>
        <FormulaInput>
          sum
          <svg width="9" height="6" viewBox="0 0 9 6" fill="none" stroke="#666" strokeWidth="1.500">
            <path d="M1 1l3.500 3.500L8 1" />
          </svg>
        </FormulaInput>
      </FormulaArea>

      <SheetArea>
        <Sheet>
          <ColHeads>
            <Corner />
            {columns.map(([c, w]) => (
              <ColHead key={c} $w={w} $on={c === 'F'}>
                {c}
              </ColHead>
            ))}
          </ColHeads>
          {rowNumbers.map((n) => (
            <Row key={n}>
              <RowHead $on={n === 2}>{n}</RowHead>
              {renderRow(n)}
            </Row>
          ))}
        </Sheet>
        <VScroll>
          <ScrollBtn>
            <svg width="8" height="4" viewBox="0 0 8 4" fill="#666">
              <path d="M0 4l4-4 4 4z" />
            </svg>
          </ScrollBtn>
          <ScrollThumb />
          <ScrollTrack />
          <ScrollBtn>
            <svg width="8" height="4" viewBox="0 0 8 4" fill="#666">
              <path d="M0 0l4 4 4-4z" />
            </svg>
          </ScrollBtn>
        </VScroll>
      </SheetArea>

      <SheetBar>
        <NavArrows>
          <svg width="5" height="8" viewBox="0 0 5 8" fill="#c0c0c0">
            <path d="M5 0L0 4l5 4z" />
          </svg>
          <svg width="5" height="8" viewBox="0 0 5 8" fill="#c0c0c0">
            <path d="M0 0l5 4-5 4z" />
          </svg>
        </NavArrows>
        {sheets.map(([name, w, kind]) => (
          <SheetTab key={name} $w={w} $kind={kind}>
            {name}
          </SheetTab>
        ))}
        <AddSheet>+</AddSheet>
        <HScroll>
          <HGrip />
          <HLeft>
            <svg width="4" height="7" viewBox="0 0 4 7" fill="#555">
              <path d="M4 0L0 3.500 4 7z" />
            </svg>
          </HLeft>
          <HThumb />
        </HScroll>
        <Overlay>
          <svg width="20" height="20" viewBox="0 0 20 20">
            <rect x="0" y="7" width="4" height="13" fill="#8d8d8d" />
            <rect x="7" y="9" width="4" height="11" fill="#8d8d8d" />
            <path d="M5.500.5h13v12h-13z" fill="none" stroke="#6f6f6f" />
            <path d="M12 2v6" stroke="#aaa" />
          </svg>
        </Overlay>
      </SheetBar>

      <StatusBar>
        <ReadyText>Ready</ReadyText>
        <ViewBtns>
          <ViewBtn $on>
            <svg width="13" height="12" viewBox="0 0 13 12" fill="none" stroke="#777">
              <path d="M.5.5h12v11H.5zM.5 4.200h12M.5 7.800h12M4.500.5v11M8.500.5v11" />
            </svg>
          </ViewBtn>
          <ViewBtn>
            <svg width="13" height="12" viewBox="0 0 13 12" fill="none" stroke="#777">
              <path d="M.5.5h12v11H.5zM3.500 2.500h6v7h-6zM5 5h3M5 7h3" />
            </svg>
          </ViewBtn>
          <ViewBtn>
            <svg width="13" height="12" viewBox="0 0 13 12" fill="none" stroke="#777">
              <path d="M.5.5h12v11H.5zM3.500.5v6h6v-6M6.500.5v6" />
            </svg>
          </ViewBtn>
        </ViewBtns>
        <Zoomer>
          <ZoomSign>-</ZoomSign>
          <ZoomTrack />
          <ZoomSign>+</ZoomSign>
          <ZoomValue>100%</ZoomValue>
        </Zoomer>
      </StatusBar>
    </Window>
  );
}

export default App;
